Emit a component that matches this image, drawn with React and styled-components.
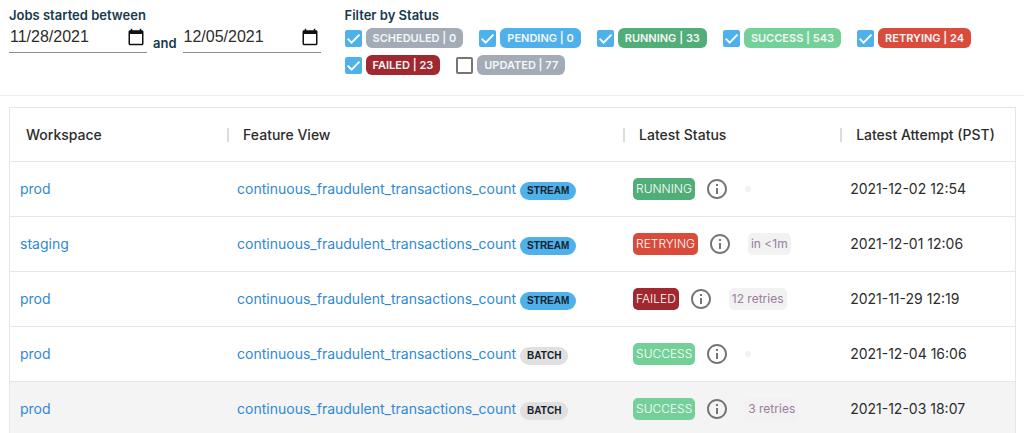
import { useState } from 'react'
import styled, { createGlobalStyle } from 'styled-components'

const COLORS = {
  navy: '#173a4c',
  text: '#2c2c2c',
  link: '#3089d3',
  border: '#e6e6e6',
  blue: '#4fb1ec',
  grey: '#a3abb7',
  green: '#51ae78',
  lightGreen: '#74d099',
  red: '#d94c3c',
  darkRed: '#a1282e',
}

const STATUS_COLORS = {
  SCHEDULED: COLORS.grey,
  PENDING: COLORS.blue,
  RUNNING: COLORS.green,
  SUCCESS: COLORS.lightGreen,
  RETRYING: COLORS.red,
  FAILED: COLORS.darkRed,
  UPDATED: COLORS.grey,
}

const FILTERS = [
  { status: 'SCHEDULED', count: 0 },
  { status: 'PENDING', count: 0 },
  { status: 'RUNNING', count: 33 },
  { status: 'SUCCESS', count: 543 },
  { status: 'RETRYING', count: 24 },
  { status: 'FAILED', count: 23 },
  { status: 'UPDATED', count: 77 },
]

const FEATURE_VIEW = 'continuous_fraudulent_transactions_count'

const JOBS = [
  { workspace: 'prod', type: 'STREAM', status: 'RUNNING', note: '', attempt: '2021-12-02 12:54' },
  { workspace: 'staging', type: 'STREAM', status: 'RETRYING', note: 'in <1m', attempt: '2021-12-01 12:06' },
  { workspace: 'prod', type: 'STREAM', status: 'FAILED', note: '12 retries', attempt: '2021-11-29 12:19' },
  { workspace: 'prod', type: 'BATCH', status: 'SUCCESS', note: '', attempt: '2021-12-04 16:06' },
  { workspace: 'prod', type: 'BATCH', status: 'SUCCESS', note: '3 retries', attempt: '2021-12-03 18:07', active: true },
]

const CalendarIcon = () => (
  <svg width="18" height="18" viewBox="0 0 24 24" fill="#111" aria-hidden="true">
    <path d="M20 3h-1V1h-2v2H7V1H5v2H4c-1.1 0-2 .9-2 2v16c0 1.1.9 2 2 2h16c1.1 0 2-.9 2-2V5c0-1.1-.9-2-2-2zm0 18H4V8h16v13z" />
  </svg>
)

const InfoIcon = () => (
  <svg width="24" height="24" viewBox="0 0 24 24" fill="currentColor" aria-hidden="true">
    <path d="M11 7h2v2h-2zm0 4h2v6h-2zm1-9C6.48 2 2 6.48 2 12s4.48 10 10 10 10-4.48 10-10S17.52 2 12 2zm0 18c-4.41 0-8-3.59-8-8s3.59-8 8-8 8 3.59 8 8-3.59 8-8 8z" />
  </svg>
)

const DateField = ({ label, value, onChange }) => (
  <DateBox>
    <DateInput type="date" aria-label={label} value={value} onChange={(e) => onChange(e.target.value)} />
    <CalendarIcon />
  </DateBox>
)

const StatusFilter = ({ status, count, checked, onToggle }) => (
  <FilterLabel>
    <CheckWrap>
      <Checkbox type="checkbox" checked={checked} onChange={onToggle} />
      {checked && (
        <svg viewBox="0 0 18 18" fill="none" stroke="#fff" strokeWidth="2" aria-hidden="true">
          <path d="M2.8 9.2 7 13.3 15.3 4.9" />
        </svg>
      )}
    </CheckWrap>
    <FilterBadge $color={STATUS_COLORS[status]}>
      {status} | {count}
    </FilterBadge>
  </FilterLabel>
)

const JobRow = ({ job }) => (
  <Row $active={job.active}>
    <Cell>
      <Link href="#workspace">{job.workspace}</Link>
    </Cell>
    <Cell>
      <Link href="#feature-view">{FEATURE_VIEW}</Link>
      <TypePill $stream={job.type === 'STREAM'}>{job.type}</TypePill>
    </Cell>
    <Cell>
      <StatusGroup>
        <StatusBadge $color={STATUS_COLORS[job.status]}>{job.status}</StatusBadge>
        <InfoButton type="button" aria-label="Info">
          <InfoIcon />
        </InfoButton>
        <Note>{job.note}</Note>
      </StatusGroup>
    </Cell>
    <Cell>{job.attempt}</Cell>
  </Row>
)

export default function App() {
  const [from, setFrom] = useState('2021-11-28')
  const [to, setTo] = useState('2021-12-05')
  const [hidden, setHidden] = useState(['UPDATED'])

  const toggle = (status) =>
    setHidden(hidden.includes(status) ? hidden.filter((s) => s !== status) : [...hidden, status])

  return (
    <>
      <GlobalStyles />
      <Toolbar>
        <div>
          <Heading>Jobs started between</Heading>
          <DateRange>
            <DateField label="From" value={from} onChange={setFrom} />
            <And>and</And>
            <DateField label="To" value={to} onChange={setTo} />
          </DateRange>
        </div>
        <div>
          <Heading>Filter by Status</Heading>
          <Filters>
            {FILTERS.map(({ status, count }) => (
              <StatusFilter
                key={status}
                status={status}
                count={count}
                checked={!hidden.includes(status)}
                onToggle={() => toggle(status)}
              />
            ))}
          </Filters>
        </div>
      </Toolbar>
      <Main>
        <Table>
          <thead>
            <tr>
              <HeadCell $width="21.6%">Workspace</HeadCell>
              <HeadCell $width="39.4%">Feature View</HeadCell>
              <HeadCell $width="21.6%">Latest Status</HeadCell>
              <HeadCell>Latest Attempt (PST)</HeadCell>
            </tr>
          </thead>
          <tbody>
            {JOBS.map((job) => (
              <JobRow key={job.attempt} job={job} />
            ))}
          </tbody>
        </Table>
      </Main>
    </>
  )
}

const GlobalStyles = createGlobalStyle`
  * {
    box-sizing: border-box;
  }
  body {
    margin: 0;
    background: #fff;
    color: ${COLORS.text};
    font-family: Inter, 'Liberation Sans', sans-serif;
    font-size: 14px;
  }
`

const Toolbar = styled.header`
  display: grid;
  grid-template-columns: auto 1fr;
  gap: 24px;
  padding: 7px 9px 20px;
  border-bottom: 1px solid #eeeef3;
`

const Heading = styled.h2`
  margin: 0;
  color: ${COLORS.navy};
  font-size: 13px;
  font-weight: 600;
  line-height: 17px;
`

const DateRange = styled.div`
  display: flex;
  align-items: flex-end;
  gap: 6px;
`

const DateBox = styled.div`
  display: flex;
  align-items: center;
  width: 138px;
  height: 29px;
  padding: 0 2px 3px 1px;
  border-bottom: 1px solid #8c8c8c;
`

const DateInput = styled.input`
  flex: 1;
  min-width: 0;
  padding: 0;
  border: 0;
  outline: 0;
  background: transparent;
  color: ${COLORS.text};
  font-family: 'Liberation Sans', Arial, sans-serif;
  font-size: 16px;
  &::-webkit-datetime-edit-month-field,
  &::-webkit-datetime-edit-day-field,
  &::-webkit-datetime-edit-year-field {
    padding: 0;
  }
  &::-webkit-calendar-picker-indicator {
    display: none;
  }
`

const And = styled.span`
  color: ${COLORS.navy};
  font-size: 13px;
  font-weight: 600;
  line-height: 20px;
`

const Filters = styled.div`
  display: flex;
  flex-wrap: wrap;
  gap: 7px 16px;
  padding-top: 4px;
`

const FilterLabel = styled.label`
  display: flex;
  align-items: center;
  gap: 4px;
  cursor: pointer;
`

const CheckWrap = styled.span`
  display: grid;
  width: 17px;
  height: 17px;
  > * {
    grid-area: 1 / 1;
  }
  svg {
    pointer-events: none;
  }
`

const Checkbox = styled.input`
  appearance: none;
  width: 17px;
  height: 17px;
  margin: 0;
  border: 2px solid #757575;
  border-radius: 2px;
  &:checked {
    border-color: ${COLORS.blue};
    background: ${COLORS.blue};
  }
`

const FilterBadge = styled.span`
  padding: 0 7px;
  border-radius: 6px;
  background: ${({ $color }) => $color};
  color: #f5f7f8;
  font-size: 11px;
  font-weight: 600;
  line-height: 20px;
`

const Main = styled.main`
  padding: 11px 8px 0 9px;
`

const Table = styled.table`
  width: 100%;
  table-layout: fixed;
  border-collapse: separate;
  border-spacing: 0;
  border: 1px solid ${COLORS.border};
  border-bottom: 0;
`

const HeadCell = styled.th`
  width: ${({ $width }) => $width};
  height: 54px;
  padding: 0;
  border-bottom: 1px solid ${COLORS.border};
  font-size: 14px;
  font-weight: 500;
  line-height: 14px;
  text-align: left;
  white-space: nowrap;
  &::before {
    content: '';
    display: inline-block;
    width: 14px;
    height: 14px;
    border-left: 2px solid #dcdcdc;
    vertical-align: top;
  }
  &:first-child::before {
    border-color: transparent;
  }
`

const Row = styled.tr`
  background: ${({ $active }) => ($active ? '#f4f4f4' : '#fff')};
`

const Cell = styled.td`
  height: 55px;
  padding: 0 10px;
  border-bottom: 1px solid ${COLORS.border};
  line-height: 20px;
  white-space: nowrap;
`

const Link = styled.a`
  color: ${COLORS.link};
  text-decoration: none;
`

const TypePill = styled.span`
  display: inline-block;
  margin-left: 4px;
  padding: 0 7px;
  border-radius: 9px;
  background: ${({ $stream }) => ($stream ? COLORS.blue : '#e0e0e0')};
  color: #16222b;
  font-family: 'Liberation Sans', Arial, sans-serif;
  font-size: 10px;
  font-weight: 700;
  line-height: 18px;
`

const StatusGroup = styled.div`
  display: flex;
  align-items: center;
`

const StatusBadge = styled.span`
  padding: 0 3px;
  border-radius: 5px;
  background: ${({ $color }) => $color};
  color: #fff;
  font-size: 12px;
  font-weight: 300;
  line-height: 22px;
`

const InfoButton = styled.button`
  display: flex;
  margin: 0 16px 0 10px;
  padding: 0;
  border: 0;
  background: none;
  color: #757575;
  cursor: pointer;
`

const Note = styled.span`
  padding: 3px;
  border-radius: 5px;
  background: #f2f2f2;
  color: #9b7c9f;
  font-size: 12px;
  line-height: 16px;
`
